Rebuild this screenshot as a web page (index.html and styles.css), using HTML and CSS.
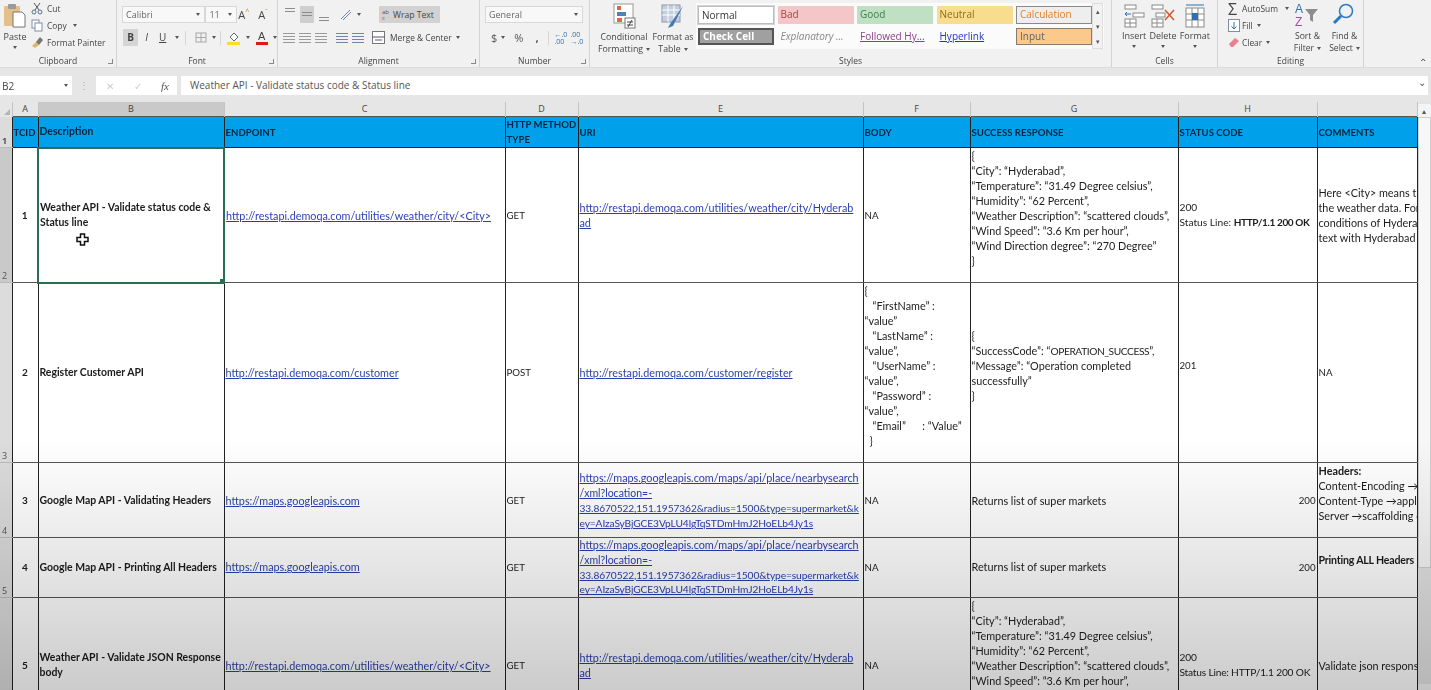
FILE: index.html
```html
<!DOCTYPE html>
<html lang="en">
<head>
  <meta charset="UTF-8">
  <title>API Test Cases - Excel</title>
  <link rel="stylesheet" href="styles.css">
</head>
<body>
  <!-- Ribbon -->
  <div class="ribbon">
    <div class="group clipboard">
      <div class="group-body">
        <div class="big-btn paste">
          <svg width="24" height="26" viewBox="0 0 24 26"><rect x="1" y="3" width="16" height="20" rx="1" fill="#e3c08a"/><rect x="5" y="1" width="8" height="5" rx="1" fill="#9a9a9a"/><path d="M10 9h9l3 3v12H10z" fill="#fff" stroke="#777"/></svg>
          <span>Paste</span>
          <span class="caret"></span>
        </div>
        <div class="list">
          <div class="list-item"><svg width="12" height="13" viewBox="0 0 12 13" fill="none" stroke="#5a6f8c"><circle cx="3" cy="10" r="2"/><circle cx="9" cy="10" r="2"/><path d="M4 8 9 1M8 8 3 1" stroke="#555"/></svg>Cut</div>
          <div class="list-item"><svg width="12" height="13" viewBox="0 0 12 13" fill="#fff" stroke="#7d8ea5"><rect x="1" y="1" width="7" height="8"/><rect x="4" y="4" width="7" height="8"/></svg>Copy<span class="caret side"></span></div>
          <div class="list-item"><svg width="12" height="13" viewBox="0 0 12 13"><path d="M1 10 5 6l3 3-4 3z" fill="#e3b56a"/><path d="M5 6l4-5 3 3-4 5z" fill="#777"/></svg>Format Painter</div>
        </div>
      </div>
      <div class="group-label">Clipboard<i class="launcher"></i></div>
    </div>

    <div class="group font">
      <div class="group-body stack">
        <div class="tool-row">
          <div class="select font-name">Calibri<span class="caret"></span></div>
          <div class="select font-size">11<span class="caret"></span></div>
          <span class="glyph grow">A<sup>^</sup></span>
          <span class="glyph shrink">A<sup>ˇ</sup></span>
        </div>
        <div class="tool-row">
          <span class="tbtn on"><b>B</b></span>
          <span class="tbtn"><i>I</i></span>
          <span class="tbtn"><u>U</u></span><span class="caret"></span>
          <span class="vsep"></span>
          <svg class="ico" width="14" height="13" viewBox="0 0 14 13" fill="none" stroke="#a8a8a8"><rect x="2" y="2" width="10" height="9"/><path d="M7 2v9M2 6.500h10"/></svg><span class="caret"></span>
          <span class="vsep first"></span>
          <svg class="ico" width="16" height="15" viewBox="0 0 16 15"><path d="M4 7l4-4 4 4-4 4z" fill="#fff" stroke="#666"/><rect x="1" y="12" width="13" height="3" fill="#f5e11f"/></svg><span class="caret"></span>
          <svg class="ico color" width="14" height="15" viewBox="0 0 14 15"><text x="3" y="10" font-size="11" font-family="Liberation Sans" fill="#444">A</text><rect x="1" y="12" width="12" height="3" fill="#e01818"/></svg><span class="caret"></span>
        </div>
      </div>
      <div class="group-label">Font<i class="launcher"></i></div>
    </div>

    <div class="group alignment">
      <div class="group-body stack">
        <div class="tool-row">
          <span class="align-ico top"></span>
          <span class="align-ico middle on"></span>
          <span class="align-ico bottom"></span>
          <svg class="ico orient" width="14" height="14" viewBox="0 0 14 14" fill="none" stroke="#555"><path d="M2 11 11 2M4 12l8-8" stroke="#6f86a8"/></svg><span class="caret"></span>
          <span class="wrap-btn"><span class="ab">ab<br>c</span>Wrap Text</span>
        </div>
        <div class="tool-row">
          <span class="lines left"></span>
          <span class="lines center"></span>
          <span class="lines right"></span>
          <span class="vsep blank"></span>
          <span class="lines indent"></span>
          <span class="lines indent"></span>
          <svg class="ico merge" width="13" height="13" viewBox="0 0 13 13" fill="#fff" stroke="#777"><rect x=".5" y=".5" width="12" height="12"/><path d="M.5 6h12M3 9h7" stroke="#557"/></svg>
          <span class="merge-text">Merge &amp; Center</span><span class="caret"></span>
        </div>
      </div>
      <div class="group-label">Alignment<i class="launcher"></i></div>
    </div>

    <div class="group number">
      <div class="group-body stack">
        <div class="tool-row"><div class="select num-format">General<span class="caret"></span></div></div>
        <div class="tool-row num-tools">
          <span class="num-glyph">$</span><span class="caret"></span>
          <span class="num-glyph">%</span>
          <span class="num-glyph comma">,</span>
          <span class="vsep"></span>
          <span class="decimal">←.0<br>.00</span>
          <span class="decimal">.00<br>→.0</span>
        </div>
      </div>
      <div class="group-label">Number<i class="launcher"></i></div>
    </div>

    <div class="group styles">
      <div class="group-body">
        <div class="big-btn cond">
          <svg width="24" height="26" viewBox="0 0 24 26"><rect x="2" y="1" width="19" height="19" fill="#fff" stroke="#999"/><rect x="5" y="3" width="4" height="4" fill="#d96a3a"/><rect x="5" y="9" width="9" height="4" fill="#4f81bd"/><rect x="5" y="15" width="5" height="4" fill="#d96a3a"/><rect x="13" y="15" width="10" height="10" fill="#fff" stroke="#777"/><path d="M15 19h6M15 22h6M20 17l-4 7" stroke="#444"/></svg>
          <span>Conditional<br>Formatting<em class="caret"></em></span>
        </div>
        <div class="big-btn as-table">
          <svg width="24" height="26" viewBox="0 0 24 26"><rect x="1" y="2" width="18" height="17" fill="#c3cfdd" stroke="#8a9ab0"/><path d="M1 7h18M1 12h18M7 2v17M13 2v17" stroke="#fff"/><path d="M22 3 9 21l-2 4 5-2z" fill="#4a78b0"/></svg>
          <span>Format as<br>Table<em class="caret"></em></span>
        </div>
        <div class="gallery">
          <div class="cells">
            <span class="style normal">Normal</span>
            <span class="style bad">Bad</span>
            <span class="style good">Good</span>
            <span class="style neutral">Neutral</span>
            <span class="style calc">Calculation</span>
            <span class="style check">Check Cell</span>
            <span class="style expl">Explanatory ...</span>
            <span class="style followed">Followed Hy...</span>
            <span class="style hyper">Hyperlink</span>
            <span class="style input">Input</span>
          </div>
          <div class="gallery-scroll"><span>▴</span><span>▾</span><span>▾</span></div>
        </div>
      </div>
      <div class="group-label">Styles</div>
    </div>

    <div class="group cells-group">
      <div class="group-body spaced">
        <div class="big-btn">
          <svg width="22" height="24" viewBox="0 0 22 24" fill="#fff" stroke="#8a8a8a"><rect x="2" y="1" width="11" height="4"/><rect x="10" y="9" width="11" height="4"/><rect x="2" y="15" width="11" height="8"/><path d="M2 19h11M7 15v8"/><path d="M8 10H2M4 8l-2 2 2 2" stroke="#2f6fb5" fill="none"/></svg>
          <span>Insert</span><span class="caret"></span>
        </div>
        <div class="big-btn">
          <svg width="24" height="24" viewBox="0 0 24 24" fill="#fff" stroke="#8a8a8a"><rect x="1" y="1" width="11" height="4"/><rect x="5" y="9" width="9" height="4"/><rect x="1" y="15" width="11" height="8"/><path d="M1 19h11M6 15v8"/><path d="M14 6l9 10M23 6l-9 10" stroke="#d9532c" stroke-width="1.500" fill="none"/></svg>
          <span>Delete</span><span class="caret"></span>
        </div>
        <div class="big-btn">
          <svg width="24" height="24" viewBox="0 0 24 24" fill="#fff" stroke="#8a8a8a"><rect x="3" y="4" width="18" height="19"/><path d="M9 4v19M15 4v19M3 10h18M3 16h18"/><rect x="9" y="9" width="6" height="7" fill="#2f6fb5" stroke="none"/><path d="M3 1h18" stroke="#2f6fb5"/></svg>
          <span>Format</span><span class="caret"></span>
        </div>
      </div>
      <div class="group-label">Cells</div>
    </div>

    <div class="group editing">
      <div class="group-body">
        <div class="list">
          <div class="list-item"><span class="sigma">Σ</span>AutoSum<span class="caret side wide"></span></div>
          <div class="list-item"><svg width="12" height="13" viewBox="0 0 12 13" fill="#fff" stroke="#7d8ea5"><rect x=".5" y=".5" width="11" height="12"/><path d="M6 3v7M3.500 7.500 6 10l2.500-2.500" stroke="#2f6fb5" fill="none"/></svg>Fill<span class="caret side"></span></div>
          <div class="list-item"><svg width="12" height="13" viewBox="0 0 12 13"><path d="M1 8l6-6 4 3-6 6H3z" fill="#ea7f8e"/></svg>Clear<span class="caret side"></span></div>
        </div>
        <div class="big-btn">
          <svg width="26" height="26" viewBox="0 0 26 26"><text x="1" y="11" font-size="12" font-family="Liberation Sans" fill="#2f6fb5">A</text><text x="1" y="24" font-size="12" font-family="Liberation Sans" fill="#9b4fb0">Z</text><path d="M11 7h13l-5 6v7l-3-2v-5z" fill="#8d8d8d"/></svg>
          <span>Sort &amp;<br>Filter<em class="caret"></em></span>
        </div>
        <div class="big-btn">
          <svg width="24" height="26" viewBox="0 0 24 26" fill="none" stroke="#2f78c4"><circle cx="14" cy="9" r="6.500" stroke-width="1.500"/><path d="M9 14 2 21" stroke-width="3"/></svg>
          <span>Find &amp;<br>Select<em class="caret"></em></span>
        </div>
      </div>
      <div class="group-label">Editing</div>
    </div>
    <div class="collapse">⌃</div>
  </div>

  <!-- Formula bar -->
  <div class="formula-bar">
    <div class="name-box">B2<span class="caret"></span></div>
    <div class="dots">⋮</div>
    <div class="fx-box"><span>✕</span><span>✓</span><i>fx</i></div>
    <div class="formula-input">Weather API - Validate status code &amp; Status line<span class="expand">⌄</span></div>
  </div>

  <!-- Sheet -->
  <div class="sheet">
    <table class="grid">
      <colgroup>
        <col class="c-row"><col class="c-a"><col class="c-b"><col class="c-c"><col class="c-d"><col class="c-e"><col class="c-f"><col class="c-g"><col class="c-h"><col class="c-i">
      </colgroup>
      <thead>
        <tr class="letters">
          <th class="corner"><span class="tri"></span></th><th>A</th><th class="sel">B</th><th>C</th><th>D</th><th>E</th><th>F</th><th>G</th><th>H</th><th></th>
        </tr>
      </thead>
      <tbody>
        <tr class="head-row">
          <td class="row-no">1</td>
          <td>TCID</td><td class="mixed">Description</td><td>ENDPOINT</td><td>HTTP METHOD<br>TYPE</td><td>URI</td><td>BODY</td><td>SUCCESS RESPONSE</td><td>STATUS CODE</td><td>COMMENTS</td>
        </tr>
        <tr class="r135">
          <td class="row-no on">2</td>
          <td class="id">1</td>
          <td class="desc active">Weather API - Validate status code &amp;<br>Status line<span class="handle"></span>
            <svg class="cursor" width="13" height="13" viewBox="0 0 13 13"><path d="M4.500 1h4v3.500H12v4H8.500V12h-4V8.500H1v-4h3.500z" fill="#fff" stroke="#111" stroke-width="1.500"/></svg>
          </td>
          <td><a href="#">http://restapi.demoqa.com/utilities/weather/city/&lt;City&gt;</a></td>
          <td class="up">GET</td>
          <td><a href="#">http://restapi.demoqa.com/utilities/weather/city/Hyderab<br>ad</a></td>
          <td class="up">NA</td>
          <td class="top">{<br>“City”: “Hyderabad”,<br>“Temperature”: “31.49 Degree celsius”,<br>“Humidity”: “62 Percent”,<br>“Weather Description”: “scattered clouds”,<br>“Wind Speed”: “3.6 Km per hour”,<br>“Wind Direction degree”: “270 Degree”<br>}</td>
          <td class="status">200<br>Status Line: <b>HTTP/1.1 200 OK</b></td>
          <td>Here &lt;City&gt; means the city<br>the weather data. For<br>conditions of Hyderabad<br>text with Hyderabad</td>
        </tr>
        <tr class="r180">
          <td class="row-no">3</td>
          <td class="id">2</td>
          <td class="desc">Register Customer API</td>
          <td><a href="#">http://restapi.demoqa.com/customer</a></td>
          <td class="up">POST</td>
          <td><a href="#">http://restapi.demoqa.com/customer/register</a></td>
          <td class="top body-json">{<br><span class="in">“FirstName” :</span><br>“value”<br><span class="in">“LastName” :</span><br>“value”,<br><span class="in">“UserName” :</span><br>“value”,<br><span class="in">“Password” :</span><br>“value”,<br><span class="in">“Email”&nbsp;&nbsp;&nbsp;&nbsp;&nbsp; : “Value”</span><br><span class="in-s">}</span></td>
          <td class="lift">{<br>“SuccessCode”: “<span class="caps">OPERATION_SUCCESS</span>”,<br>“Message”: “Operation completed<br>successfully”<br>}</td>
          <td class="lift up">201</td>
          <td class="up">NA</td>
        </tr>
        <tr class="r75">
          <td class="row-no">4</td>
          <td class="id">3</td>
          <td class="desc">Google Map API - Validating Headers</td>
          <td><a href="#">https://maps.googleapis.com</a></td>
          <td class="up">GET</td>
          <td><a href="#">https://maps.googleapis.com/maps/api/place/nearbysearch<br><span class="mid">/xml?location=-</span><br><span class="narrow">33.8670522,151.1957362&amp;radius=1500&amp;type=supermarket&amp;k</span><br><span class="narrow">ey=AIzaSyBjGCE3VpLU4lgTqSTDmHmJ2HoELb4Jy1s</span></a></td>
          <td class="up">NA</td>
          <td>Returns list of super markets</td>
          <td class="num up">200</td>
          <td class="top"><b>Headers:</b><br>Content-Encoding →gzip<br>Content-Type →application/json<br>Server →scaffolding on</td>
        </tr>
        <tr class="r60">
          <td class="row-no">5</td>
          <td class="id">4</td>
          <td class="desc">Google Map API - Printing All Headers</td>
          <td><a href="#">https://maps.googleapis.com</a></td>
          <td class="up">GET</td>
          <td><a href="#">https://maps.googleapis.com/maps/api/place/nearbysearch<br><span class="mid">/xml?location=-</span><br><span class="narrow">33.8670522,151.1957362&amp;radius=1500&amp;type=supermarket&amp;k</span><br><span class="narrow">ey=AIzaSyBjGCE3VpLU4lgTqSTDmHmJ2HoELb4Jy1s</span></a></td>
          <td class="up">NA</td>
          <td>Returns list of super markets</td>
          <td class="num up">200</td>
          <td class="lift note"><b>Printing ALL Headers</b></td>
        </tr>
        <tr class="r135">
          <td class="row-no"></td>
          <td class="id">5</td>
          <td class="desc">Weather API - Validate JSON Response<br>body</td>
          <td><a href="#">http://restapi.demoqa.com/utilities/weather/city/&lt;City&gt;</a></td>
          <td class="up">GET</td>
          <td><a href="#">http://restapi.demoqa.com/utilities/weather/city/Hyderab<br>ad</a></td>
          <td class="up">NA</td>
          <td class="top">{<br>“City”: “Hyderabad”,<br>“Temperature”: “31.49 Degree celsius”,<br>“Humidity”: “62 Percent”,<br>“Weather Description”: “scattered clouds”,<br>“Wind Speed”: “3.6 Km per hour”,<br>“Wind Direction degree”: “270 Degree”<br>}</td>
          <td class="status plain">200<br>Status Line: HTTP/1.1 200 OK</td>
          <td>Validate json response</td>
        </tr>
      </tbody>
    </table>
    <div class="scrollbar">
      <div class="arrow">▴</div>
      <div class="thumb"></div>
      <div class="track"></div>
      <div class="arrow">▾</div>
    </div>
  </div>
</body>
</html>
```

FILE: styles.css
```css
/* Global box sizing */
*, *::before, *::after {
  box-sizing: border-box;
}
html, body {
  height: 690px;
  overflow: hidden;
}
body {
  margin: 0;
  background: #e6e6e6;
  color: #444;
  font-family: "Open Sans", sans-serif;
  font-size: 9px;
  position: relative;
  filter: blur(0.35px);
}
/* the video frame darkens toward the bottom */
body::after {
  content: "";
  position: absolute;
  left: 0;
  right: 0;
  top: 440px;
  bottom: 0;
  background: linear-gradient(rgba(0,0,0,0), rgba(0,0,0,0.2));
  pointer-events: none;
}

/* Ribbon */
.ribbon {
  display: flex;
  height: 68px;
  background: #f1f1f1;
  border-bottom: 1px solid #dcdcdc;
  position: relative;
}
.group {
  display: flex;
  flex-direction: column;
  border-right: 1px solid #d4d4d4;
}
.group-body {
  flex: 1;
  display: flex;
  min-height: 0;
}
.group-body.stack {
  flex-direction: column;
  padding: 6px 0 0 5px;
  gap: 6px;
}
.group-body.spaced {
  justify-content: space-between;
  padding: 2px 7px 0 10px;
}
.group-label {
  height: 14px;
  padding-top: 1px;
  line-height: 14px;
  text-align: center;
  font-size: 8.5px;
  position: relative;
}
.launcher {
  position: absolute;
  right: 3px;
  bottom: 3px;
  width: 5px;
  height: 5px;
  border-right: 1px solid #888;
  border-bottom: 1px solid #888;
}
.clipboard { width: 117px; }
.font { width: 161px; }
.alignment { width: 202px; }
.number { width: 110px; }
.styles { width: 522px; }
.cells-group { width: 106px; }
.editing { width: 146px; }

.caret {
  display: inline-block;
  flex: none;
  width: 0;
  height: 0;
  border: 2px solid transparent;
  border-top: 3px solid #555;
  border-bottom: 0;
  margin-left: 4px;
  vertical-align: middle;
}
.caret.side { margin-left: 8px; }
.caret.wide { margin-left: 9px; }
em.caret { margin-left: 3px; }

.big-btn {
  display: flex;
  flex-direction: column;
  align-items: center;
  text-align: center;
  line-height: 12px;
  padding-top: 2px;
  white-space: nowrap;
}
.big-btn svg {
  flex: none;
  margin-bottom: 2px;
}
.big-btn .caret { margin: 3px 0 0; }
.big-btn em.caret { margin: 0 0 0 3px; }
.paste {
  width: 30px;
  padding-top: 3px;
}

.list {
  margin-left: 1px;
  display: flex;
  flex-direction: column;
  font-size: 8.4px;
}
.list-item {
  flex: none;
  height: 17px;
  display: flex;
  align-items: center;
  gap: 4px;
  white-space: nowrap;
}
.list-item .caret.side { margin-left: 2px; }
.list-item .caret.wide { margin-left: 5px; }

.tool-row {
  display: flex;
  align-items: center;
  height: 17px;
}
.select {
  display: flex;
  align-items: center;
  justify-content: space-between;
  height: 17px;
  padding: 0 4px 0 3px;
  background: #f8f8f8;
  border: 1px solid #d8d8d8;
  color: #666;
}
.font-name { width: 84px; }
.font-size { width: 32px; }
.num-format { width: 98px; }
.glyph {
  font-size: 11px;
  margin-left: 1px;
  width: 19px;
}
.glyph sup {
  font-size: 7px;
  color: #b8862a;
  line-height: 0;
}
.tbtn {
  width: 16px;
  height: 17px;
  text-align: center;
  line-height: 17px;
  margin-right: 1px;
  font-size: 10px;
}
.tbtn.on { background: #d5d5d5; margin-left: 1px; }
.vsep {
  width: 1px;
  height: 14px;
  background: #d6d6d6;
  margin: 0 6px;
}
.vsep.first { margin: 0 3px 0 4px; }
.vsep.blank { background: none; margin: 0 2px; }
.ico { margin-left: 2px; flex: none; }
.ico.color { margin-left: 5px; }

.align-ico {
  width: 14px;
  height: 17px;
  margin-right: 3px;
  position: relative;
  display: inline-block;
}
.align-ico::before {
  content: "";
  position: absolute;
  left: 2px;
  right: 2px;
  height: 4px;
  border-top: 1px solid #8c8c8c;
  border-bottom: 1px solid #8c8c8c;
}
.align-ico.top::before { top: 2px; }
.align-ico.middle::before { top: 6px; }
.align-ico.bottom::before { bottom: 2px; }
.align-ico.on { background: #cfcfcf; }
.orient { margin-left: 5px; }
.wrap-btn {
  display: flex;
  align-items: center;
  gap: 4px;
  width: 61px;
  height: 17px;
  margin-left: 18px;
  padding-left: 3px;
  background: #d2d2d2;
  white-space: nowrap;
  font-size: 8.6px;
}
.ab {
  font-size: 6px;
  line-height: 6px;
  color: #555;
}
.lines {
  width: 12px;
  height: 10px;
  margin-right: 4px;
  background: repeating-linear-gradient(#9a9a9a 0 1px, transparent 1px 3px);
}
.lines.indent {
  background: repeating-linear-gradient(#6f86a8 0 1px, transparent 1px 3px);
}
.merge { margin-left: 4px; }
.merge-text {
  margin-left: 5px;
  white-space: nowrap;
  font-size: 8.4px;
}

.num-tools { padding-left: 6px; }
.num-glyph {
  font-size: 11px;
  color: #555;
}
.num-tools .num-glyph + .caret { margin-right: 9px; }
.comma { margin-left: 12px; font-weight: bold; }
.num-tools .vsep { margin: 0 6px 0 9px; }
.decimal {
  font-size: 7px;
  line-height: 7px;
  margin-right: 3px;
  color: #2f6fa5;
}

/* Styles gallery */
.styles .big-btn { padding-top: 3px; line-height: 12px; font-size: 8.8px; }
.cond { width: 50px; margin-left: 9px; }
.as-table { width: 44px; margin-left: 2px; }
.gallery {
  display: flex;
  width: 408px;
  height: 46px;
  margin: 3px 0 0 1px;
  background: #fbfbfb;
}
.cells {
  display: grid;
  grid-template-columns: repeat(5, 76px);
  grid-template-rows: 18px 17px;
  gap: 4px 3.500px;
  padding: 3px 0 0 2px;
  width: 396px;
}
.style {
  display: block;
  line-height: 16px;
  padding-left: 3px;
  font-size: 10px;
  white-space: nowrap;
}
.normal { background: #fff; border: 1px solid #bdbdbd; color: #333; outline: 1px solid #d5d5d5; }
.bad { background: #f4c6c8; color: #a8433f; }
.good { background: #bfe0c3; color: #3e7d49; }
.neutral { background: #f8dd8f; color: #96691c; }
.calc { background: #eeeeee; border: 1px solid #8a8a8a; color: #e0812a; line-height: 15px; }
.check { background: #a0a0a0; border: 2px solid #555; color: #fff; font-weight: bold; line-height: 13px; }
.expl { color: #888; font-style: italic; }
.followed { color: #8e3f8e; text-decoration: underline; }
.hyper { color: #2233cc; text-decoration: underline; }
.input { background: #fcc98c; border: 1px solid #8a7a6a; color: #5f5f6f; line-height: 15px; }
.gallery-scroll {
  width: 11px;
  display: flex;
  flex-direction: column;
  font-size: 7px;
  line-height: 15px;
  text-align: center;
  background: #f2f2f2;
  border: 1px solid #ddd;
  color: #555;
}
.gallery-scroll span { height: 15px; }

.editing .list { margin-left: 10px; width: 71px; }
.editing .list-item { gap: 2px; }
.editing .big-btn { width: 46px; font-size: 8.6px; }
.sigma {
  width: 12px;
  font-size: 16px;
  line-height: 14px;
  color: #444;
}
.collapse {
  position: absolute;
  right: 4px;
  bottom: -2px;
  font-size: 10px;
  color: #555;
}

/* Formula bar */
.formula-bar {
  display: flex;
  align-items: stretch;
  height: 19px;
  margin-top: 8px;
  font-size: 10px;
}
.name-box {
  display: flex;
  align-items: center;
  justify-content: space-between;
  width: 72px;
  padding: 0 4px 0 2px;
  background: #fff;
  color: #444;
}
.dots {
  width: 24px;
  text-align: center;
  color: #aaa;
  line-height: 19px;
}
.fx-box {
  display: flex;
  align-items: center;
  justify-content: space-between;
  width: 81px;
  padding: 0 8px 0 10px;
  background: #fff;
  color: #ccc;
}
.fx-box i {
  color: #555;
  font-family: "Liberation Serif", serif;
  font-size: 11px;
}
.formula-input {
  flex: 1;
  margin: 0 3px 0 4px;
  padding-left: 9px;
  background: #fff;
  line-height: 19px;
  color: #555;
  position: relative;
}
.expand {
  position: absolute;
  right: 2px;
  top: -3px;
  color: #555;
}

/* Sheet */
.sheet {
  display: flex;
  align-items: flex-start;
  height: 595px;
  margin-top: 7px;
  background: #fff;
  overflow: hidden;
}
.grid {
  width: 1417px;
  flex: none;
  table-layout: fixed;
  border-collapse: collapse;
  font-family: "Lato", sans-serif;
  font-size: 10.8px;
  line-height: 15px;
  color: #1c1c1c;
}
.c-row { width: 12px; }
.c-a { width: 26px; }
.c-b { width: 186px; }
.c-c { width: 281px; }
.c-d { width: 73px; }
.c-e { width: 285px; }
.c-f { width: 107px; }
.c-g { width: 208px; }
.c-h { width: 139px; }
.c-i { width: 100px; }

.letters th {
  height: 14px;
  padding: 0;
  background: #e6e6e6;
  border-right: 1px solid #c4c4c4;
  font-family: "Open Sans", sans-serif;
  font-weight: normal;
  font-size: 9px;
  line-height: 14px;
  color: #444;
}
.letters th.sel { background: #c9c9c9; }
.corner { position: relative; }
.tri {
  position: absolute;
  right: 2px;
  bottom: 2px;
  border: 3.500px solid transparent;
  border-right-color: #b4b4b4;
  border-bottom-color: #b4b4b4;
}
.grid td {
  padding: 0 1px;
  overflow: hidden;
  white-space: nowrap;
  vertical-align: middle;
  border-left: 1px solid #222;
  border-right: 1px solid #222;
  border-top: 1px solid #555;
  border-bottom: 1px solid #555;
}
.grid td.row-no {
  padding: 0 0 0 2px;
  background: #dcdcdc;
  border: 0;
  border-bottom: 1px solid #bbb;
  vertical-align: bottom;
  font-family: "Open Sans", sans-serif;
  font-size: 9px;
  color: #555;
  line-height: 13px;
}
.grid td.row-no.on { background: #c9c9c9; }
.head-row td {
  height: 30px;
  background: #00a1ea;
  color: #06243f;
  font-weight: bold;
  font-size: 9.6px;
  line-height: 15px;
  border-bottom-color: #123;
}
.head-row td.mixed { font-size: 10.4px; }
.r135 td { height: 135px; }
.r180 td { height: 180px; }
.r75 td { height: 75px; }
.r60 td { height: 60px; line-height: 14.75px; }
.grid td.id {
  text-align: center;
  font-weight: bold;
  font-size: 10px;
}
.grid td.desc { font-weight: bold; font-size: 10.45px; }
.grid td.top { vertical-align: top; }
.grid td.lift { padding-bottom: 15px; }
.grid td.num { text-align: right; }
.grid td.up { font-size: 9.7px; }
.grid td.active {
  position: relative;
  border: 2px solid #2a6f52;
}
.grid td.status { font-size: 10.2px; }
.grid td.status b { font-size: 10px; letter-spacing: -0.36px; line-height: 1; }
.grid td.status.plain { font-size: 10.2px; letter-spacing: -0.2px; }
.grid td.note b { font-size: 10.6px; letter-spacing: -0.2px; line-height: 1; }
.grid a { color: #2b3eb0; }
.mid { font-size: 10.5px; line-height: 1; }
.narrow { font-size: 10.2px; letter-spacing: -0.1px; line-height: 1; }
.caps { font-size: 10.2px; letter-spacing: -0.4px; line-height: 1; }
.in { padding-left: 8px; }
.in-s { padding-left: 5px; }
.handle {
  position: absolute;
  right: -2px;
  bottom: -2px;
  width: 5px;
  height: 5px;
  background: #2a6f52;
}
.cursor {
  position: absolute;
  left: 37px;
  top: 84px;
}

/* Scrollbar */
.scrollbar {
  flex: 1;
  display: flex;
  flex-direction: column;
  height: 595px;
  padding-top: 2px;
  background: #e4e4e4;
  color: #555;
  font-size: 8px;
  text-align: center;
}
.arrow { height: 13px; line-height: 13px; background: #f4f4f4; }
.thumb {
  height: 451px;
  background: #f7f7f7;
  border: 1px solid #cfcfcf;
}
.track { flex: 1; }
```
